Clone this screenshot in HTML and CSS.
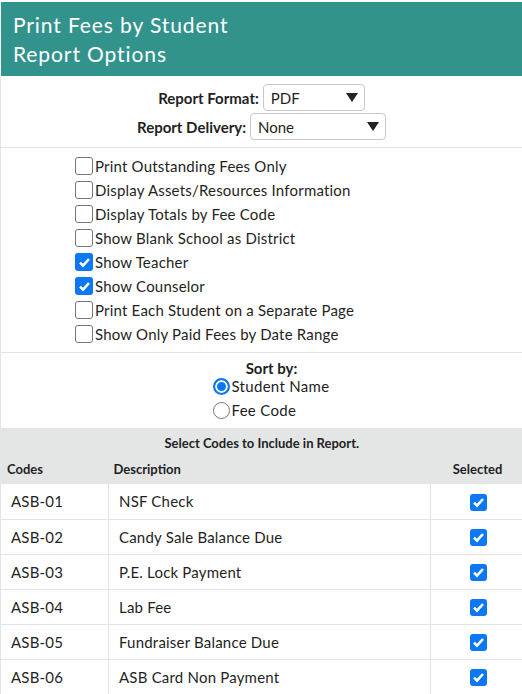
FILE: index.html
```html
<!DOCTYPE html>
<html>
<head>
<meta charset="utf-8">
<link rel="stylesheet" href="styles.css">
</head>
<body>
<div class="page">
  <div class="title-bar">
    <div class="title-line">Print Fees by Student</div>
    <div class="title-line">Report Options</div>
  </div>

  <div class="section format">
    <div class="field">
      <span class="field-label">Report Format:</span>
      <div class="select select-format"><span>PDF</span><svg class="caret" width="12" height="9" viewBox="0 0 12 9"><path d="M0 0H12L6 9Z" fill="#222"/></svg></div>
    </div>
    <div class="field">
      <span class="field-label">Report Delivery:</span>
      <div class="select select-delivery"><span>None</span><svg class="caret" width="12" height="9" viewBox="0 0 12 9"><path d="M0 0H12L6 9Z" fill="#222"/></svg></div>
    </div>
  </div>

  <div class="section options">
    <label class="opt"><span class="cb"></span>Print Outstanding Fees Only</label>
    <label class="opt"><span class="cb"></span>Display Assets/Resources Information</label>
    <label class="opt"><span class="cb"></span>Display Totals by Fee Code</label>
    <label class="opt"><span class="cb"></span>Show Blank School as District</label>
    <label class="opt"><span class="cb checked"><svg width="17" height="17" viewBox="0 0 17 17"><path d="M4 8.6L7 11.6L13 5" fill="none" stroke="#fff" stroke-width="2.6"/></svg></span>Show Teacher</label>
    <label class="opt"><span class="cb checked"><svg width="17" height="17" viewBox="0 0 17 17"><path d="M4 8.6L7 11.6L13 5" fill="none" stroke="#fff" stroke-width="2.6"/></svg></span>Show Counselor</label>
    <label class="opt"><span class="cb"></span>Print Each Student on a Separate Page</label>
    <label class="opt"><span class="cb"></span>Show Only Paid Fees by Date Range</label>
  </div>

  <div class="section sort">
    <div class="sort-label">Sort by:</div>
    <div class="radio-group">
      <label class="radio-row"><span class="radio on"></span>Student Name</label>
      <label class="radio-row"><span class="radio"></span>Fee Code</label>
    </div>
  </div>

  <table class="codes">
    <colgroup><col class="w1"><col class="w2"><col class="w3"></colgroup>
    <thead>
      <tr class="caption-row"><th colspan="3">Select Codes to Include in Report.</th></tr>
      <tr class="head-row"><th class="c1">Codes</th><th class="c2">Description</th><th class="c3">Selected</th></tr>
    </thead>
    <tbody>
      <tr><td class="c1">ASB-01</td><td class="c2">NSF Check</td><td class="c3"><span class="cb checked"><svg width="17" height="17" viewBox="0 0 17 17"><path d="M4 8.6L7 11.6L13 5" fill="none" stroke="#fff" stroke-width="2.6"/></svg></span></td></tr>
      <tr><td class="c1">ASB-02</td><td class="c2">Candy Sale Balance Due</td><td class="c3"><span class="cb checked"><svg width="17" height="17" viewBox="0 0 17 17"><path d="M4 8.6L7 11.6L13 5" fill="none" stroke="#fff" stroke-width="2.6"/></svg></span></td></tr>
      <tr><td class="c1">ASB-03</td><td class="c2">P.E. Lock Payment</td><td class="c3"><span class="cb checked"><svg width="17" height="17" viewBox="0 0 17 17"><path d="M4 8.6L7 11.6L13 5" fill="none" stroke="#fff" stroke-width="2.6"/></svg></span></td></tr>
      <tr><td class="c1">ASB-04</td><td class="c2">Lab Fee</td><td class="c3"><span class="cb checked"><svg width="17" height="17" viewBox="0 0 17 17"><path d="M4 8.6L7 11.6L13 5" fill="none" stroke="#fff" stroke-width="2.6"/></svg></span></td></tr>
      <tr><td class="c1">ASB-05</td><td class="c2">Fundraiser Balance Due</td><td class="c3"><span class="cb checked"><svg width="17" height="17" viewBox="0 0 17 17"><path d="M4 8.6L7 11.6L13 5" fill="none" stroke="#fff" stroke-width="2.6"/></svg></span></td></tr>
      <tr><td class="c1">ASB-06</td><td class="c2">ASB Card Non Payment</td><td class="c3"><span class="cb checked"><svg width="17" height="17" viewBox="0 0 17 17"><path d="M4 8.6L7 11.6L13 5" fill="none" stroke="#fff" stroke-width="2.6"/></svg></span></td></tr>
    </tbody>
  </table>
</div>
</body>
</html>
```

FILE: styles.css
```css
* { box-sizing: border-box; }
html, body { margin: 0; padding: 0; background: #fff; }
body {
  font-family: Lato, "Open Sans", sans-serif;
  color: #1f1f24;
  font-size: 15px;
}
.page {
  padding-top: 2px;
  width: 522px;
}
.title-bar {
  background: #32938c;
  color: #fff;
  padding: 8px 12px 8px 12px;
  margin-left: 1px;
  height: 74px;
}
.title-line {
  font-size: 21px;
  line-height: 29px;
  letter-spacing: 0.9px;
}
.section {
  border-bottom: 1px solid #e3e3e3;
  border-left: 1px solid #e3e6e8;
}
.format {
  padding: 8px 0 7px 0;
  display: flex;
  flex-direction: column;
  align-items: center;
  gap: 2px;
}
.field {
  display: flex;
  align-items: center;
  gap: 4px;
}
.field-label {
  font-weight: 700;
}
.select {
  height: 27px;
  border: 1px solid #c9c9c9;
  border-radius: 4px;
  display: flex;
  align-items: center;
  justify-content: space-between;
  padding: 0 6px 0 7px;
  background: #fff;
}
.select-format { width: 102px; }
.select-delivery { width: 136px; }
.caret { display: block; }

.options {
  padding: 6px 0 6px 74px;
  display: flex;
  flex-direction: column;
}
.opt {
  display: flex;
  align-items: center;
  height: 24px;
  gap: 2px;
  letter-spacing: 0.2px;
}
.cb {
  width: 18px;
  height: 18px;
  border: 1px solid #767676;
  border-radius: 3px;
  display: inline-flex;
  align-items: center;
  justify-content: center;
  background: #fff;
  flex: none;
}
.cb.checked {
  border: none;
  background: #0c78f4;
}
.cb svg { display: block; }

.sort {
  padding: 7px 0 8px 20px;
  display: flex;
  flex-direction: column;
  align-items: center;
  gap: 0;
}
.sort-label {
  font-weight: 700;
  line-height: 16px;
  height: 16px;
}
.radio-group {
  display: flex;
  flex-direction: column;
  gap: 4px;
  width: 118px;
}
.radio-row {
  display: flex;
  align-items: center;
  height: 20px;
  gap: 2px;
  letter-spacing: 0.3px;
}
.radio {
  width: 17px;
  height: 17px;
  border-radius: 50%;
  border: 1px solid #767676;
  flex: none;
  background: #fff;
}
.radio.on {
  border: 2px solid #0c78f4;
  background: #0c78f4;
  box-shadow: inset 0 0 0 2px #fff;
}

.codes {
  width: 522px;
  border-collapse: collapse;
  table-layout: fixed;
}
.w1 { width: 108px; }
.w2 { width: 322px; }
.w3 { width: 92px; }
.codes th {
  background: #e4e6e6;
  font-size: 13px;
  font-weight: 700;
  text-align: left;
}
.caption-row th {
  text-align: center;
  height: 27px;
  padding: 0;
  border-left: 1px solid #e3e6e8;
}
.head-row th {
  height: 28px;
  padding: 0 0 2px 6px;
  vertical-align: middle;
}
.head-row th:first-child { border-left: 1px solid #e3e6e8; }
.head-row th.c2 { padding-left: 5px; }
.head-row th.c3 { text-align: center; padding-left: 2px; }
.codes td {
  height: 35px;
  border: 1px solid #dfe5ea;
  border-top: none;
  padding: 0 0 0 10px;
  vertical-align: middle;
  letter-spacing: 0.2px;
}
.codes td.c1 { padding-left: 10px; border-left: 1px solid #e3e6e8; }
.codes td.c3 { text-align: center; padding: 0 0 0 4px; border-right: none; }
.codes td .cb { vertical-align: middle; width: 17px; height: 17px; }
```
